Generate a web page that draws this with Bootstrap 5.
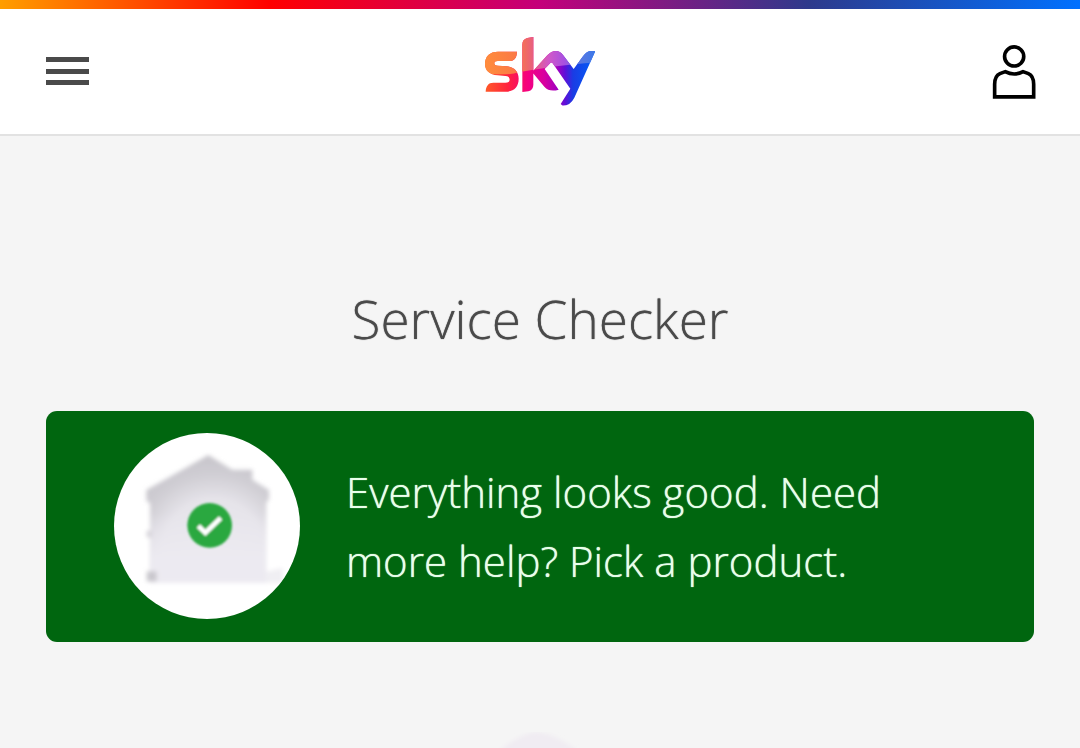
<!DOCTYPE html>
<html lang="en">
<head>
<meta charset="utf-8">
<meta name="viewport" content="width=device-width, initial-scale=1">
<title>Service Checker</title>
<link href="https://cdn.jsdelivr.net/npm/bootstrap@5.3.0/dist/css/bootstrap.min.css" rel="stylesheet">
<style>
  body { background: #f5f5f5; color: #4a4a4a; font-family: "Open Sans", "Noto Sans", sans-serif; }
  .brand-strip { height: 9px; background: linear-gradient(90deg, #ff9e00 0%, #ff0000 25%, #c4007a 50%, #2d3a8c 75%, #0071ff 100%); }
  .site-header { padding: 26px 45px; border-bottom: 2px solid #e2e2e2; }
  .header-side { flex: 1 1 0; }
  .page-main { padding: 0 46px; }
  .page-title { margin: 143px 0 52px; font-size: 53px; line-height: 80px; font-weight: 300; text-shadow: 0 0 1px currentColor; }
  .status-panel { background: #00660f; border-radius: 11px; padding: 22px 100px 23px 68px; gap: 46px; }
  .status-text { font-size: 42px; line-height: 69px; font-weight: 300; color: #e9ffeb; text-shadow: 0 0 1px currentColor; }
  .product-top { margin-top: 90px; }
</style>
</head>
<body>
<div class="brand-strip"></div>
<header class="site-header bg-white d-flex align-items-center">
  <div class="header-side d-flex">
    <button type="button" class="btn p-0 border-0 d-flex" aria-label="Menu">
      <svg width="44" height="29" viewBox="0 0 44 29" fill="#4a4a4a"><path d="M1 0h43v5H1zM1 12h43v5H1zM1 23h43v5H1z"/></svg>
    </button>
  </div>
  <a href="#" class="d-flex" aria-label="Sky home">
    <svg width="110" height="73" viewBox="45 28 330 219">
      <defs>
        <linearGradient id="skyBase" gradientUnits="userSpaceOnUse" x1="45" y1="0" x2="375" y2="0">
          <stop offset="0" stop-color="#ff5a28"/><stop offset=".2" stop-color="#ff243c"/><stop offset=".39" stop-color="#f50080"/><stop offset=".54" stop-color="#d800a0"/><stop offset=".66" stop-color="#a000c0"/><stop offset=".73" stop-color="#5c10d8"/><stop offset=".8" stop-color="#1a3ce4"/><stop offset="1" stop-color="#0060f8"/>
        </linearGradient>
        <linearGradient id="skyGloss" gradientUnits="userSpaceOnUse" x1="45" y1="0" x2="375" y2="0">
          <stop offset="0" stop-color="#ff8c3c"/><stop offset=".3" stop-color="#fa7846"/><stop offset=".43" stop-color="#e8607c"/><stop offset=".58" stop-color="#d058c8"/><stop offset=".72" stop-color="#a850e0"/><stop offset=".84" stop-color="#6078e0"/><stop offset="1" stop-color="#3c78e8"/>
        </linearGradient>
        <clipPath id="skyShape">
          <path d="M141 78C140 97 133 106 118 106H83q-10 0-10 7t11 7l26 2c23 2 36 16 36 37 0 25-15 39-39 39H47c1-17 8-27 23-27h36q13 0 13-9 0-10-13-11l-23-2c-25-2-38-15-38-34 0-23 14-37 39-37z"/>
          <path d="M190 34v143q0 16-15 20l-18 2V57q0-16 15-20z"/>
          <path d="M192 133l40-44q12-13 26-13 12 0 21 12l32 42 28-38q11-16 25-16h12L313 216q-12 24-35 24l-6-5 29-46-53-76q-3-5-7-1l-17 18 42 62q-28 8-43-9l-34-41q-6-6 3-9z"/>
        </clipPath>
      </defs>
      <g clip-path="url(#skyShape)">
        <path fill="url(#skyBase)" d="M40 26h340v219H40z"/>
        <path fill="url(#skyGloss)" d="M40 26h340v84q-66 4-120 12l-70 10-45 8q-16 6-50 6-35 0-55-6z"/>
      </g>
    </svg>
  </a>
  <div class="header-side d-flex justify-content-end">
    <button type="button" class="btn p-0 border-0 d-flex" aria-label="Account">
      <svg width="43" height="54" viewBox="37 44 130 162" fill="none" stroke="#000" stroke-width="11" overflow="visible">
        <circle cx="104" cy="78" r="29"/>
        <path d="M45 200v-38q0-25 16-32l16-6q27 14 54 0l16 6q16 7 16 32v38z"/>
      </svg>
    </button>
  </div>
</header>

<main class="page-main">
  <h1 class="page-title text-center">Service Checker</h1>
  <section class="status-panel d-flex align-items-center">
    <svg class="flex-shrink-0" width="186" height="186" viewBox="42 39 558 558" aria-hidden="true">
      <defs>
        <filter id="soft" x="-20%" y="-20%" width="140%" height="140%"><feGaussianBlur stdDeviation="7"/></filter>
        <filter id="slight" x="-20%" y="-20%" width="140%" height="140%"><feGaussianBlur stdDeviation="3"/></filter>
        <radialGradient id="wall" gradientUnits="userSpaceOnUse" cx="340" cy="390" r="290">
          <stop offset="0" stop-color="#e9e7ee"/><stop offset=".52" stop-color="#e6e4ea"/><stop offset=".78" stop-color="#d0ced4"/><stop offset="1" stop-color="#c6c4ca"/>
        </radialGradient>
        <linearGradient id="fade" x1="0" y1="0" x2="0" y2="1">
          <stop offset=".45" stop-color="#eceaf1" stop-opacity="0"/><stop offset=".8" stop-color="#eceaf1"/>
        </linearGradient>
        <clipPath id="disc"><circle cx="321" cy="318" r="279"/></clipPath>
      </defs>
      <circle cx="321" cy="318" r="279" fill="#fff"/>
      <g clip-path="url(#disc)">
        <g filter="url(#soft)">
          <path fill="url(#wall)" d="M139 210l186-105 72 44h60v30l50 31v30l-8 6v241H150V250l-11-8z"/>
          <path fill="url(#fade)" d="M152 108h346v380H152z"/>
          <path fill="#c9c7cd" d="M140 454h30v30h-30z"/>
          <path fill="#d5d3d9" d="M140 332h14v20h-14z"/>
          <path fill="#f0eff3" d="M498 455l50-12v45h-50z"/>
        </g>
        <g filter="url(#slight)">
          <circle cx="329" cy="316" r="67" fill="#2aa840"/>
          <path d="M295 318l21 20 46-44" fill="none" stroke="#fff" stroke-width="14"/>
        </g>
      </g>
    </svg>
    <p class="status-text mb-0">Everything looks good. Need more help? Pick a product.</p>
  </section>
  <div class="product-top d-flex justify-content-center overflow-hidden">
    <svg width="90" height="16" viewBox="0 0 90 16" aria-hidden="true">
      <defs><filter id="haze" x="-20%" y="-20%" width="140%" height="140%"><feGaussianBlur stdDeviation="2"/></filter></defs>
      <path filter="url(#haze)" fill="#f0ecf2" d="M3 20Q22 3 40 0q18 0 44 20z"/>
    </svg>
  </div>
</main>
<script src="https://cdn.jsdelivr.net/npm/bootstrap@5.3.0/dist/js/bootstrap.bundle.min.js"></script>
</body>
</html>
